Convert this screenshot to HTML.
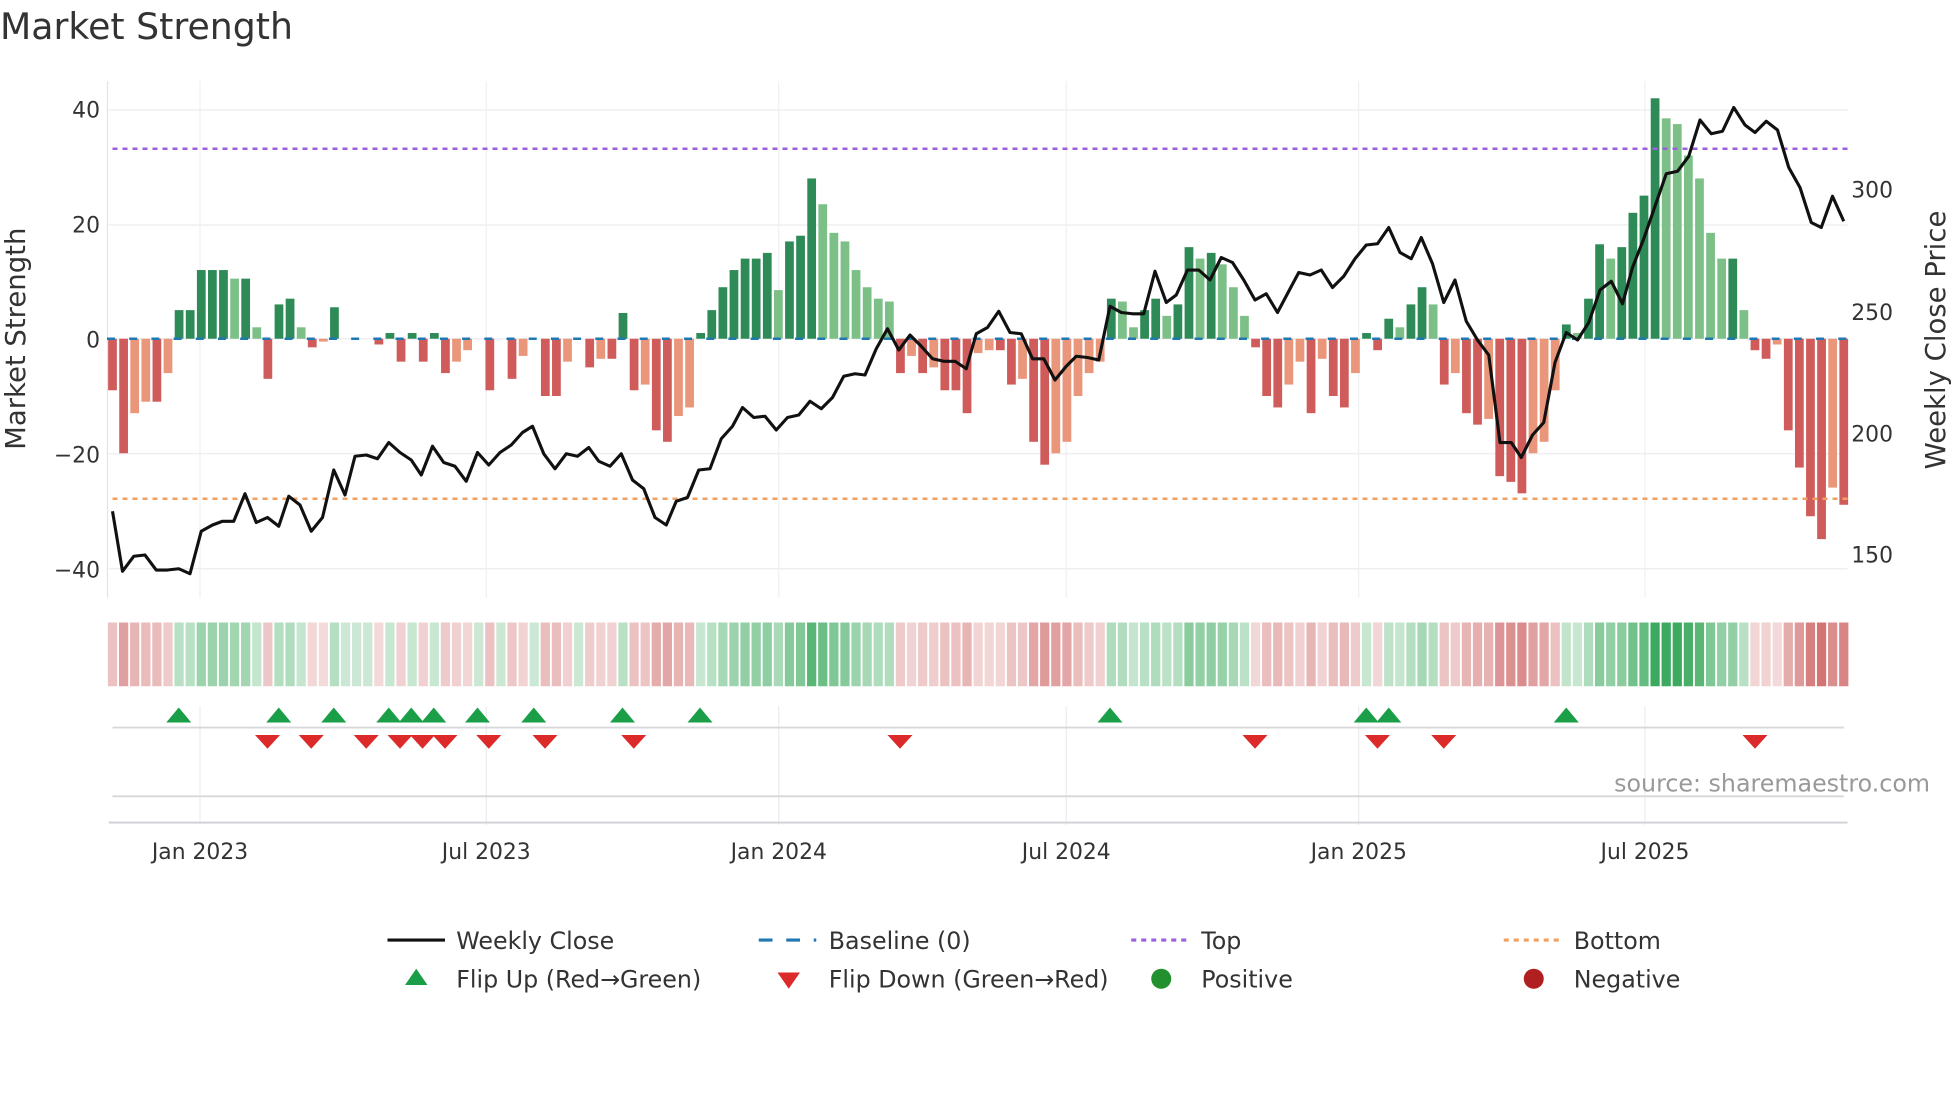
<!DOCTYPE html>
<html><head><meta charset="utf-8"><style>
html,body{margin:0;padding:0;background:#fff;width:1960px;height:1102px;overflow:hidden}
svg{display:block}
text{font-family:"DejaVu Sans","Liberation Sans",sans-serif;fill:#333}
</style></head><body>
<svg id="s" width="1960" height="1102" viewBox="0 0 1568 881.6" xmlns="http://www.w3.org/2000/svg">
<g id="grid"></g>
<g id="heat"></g>
<g id="bars"></g>
<line x1="90" y1="119" x2="1478" y2="119" stroke="#9b5fe0" stroke-width="2" stroke-dasharray="4,4"/>
<line x1="90" y1="399" x2="1478" y2="399" stroke="#f0a060" stroke-width="2" stroke-dasharray="4,4"/>
<g id="base"></g>
<polyline id="price" fill="none" stroke="#111" stroke-width="2.5" stroke-linejoin="round"/>
<g id="marks"></g>
<text x="0" y="31" font-size="29">Market Strength</text>
<g font-size="17.5" text-anchor="end">
<text x="80" y="94">40</text><text x="80" y="278">0</text><text x="80" y="186">20</text>
<text x="80" y="370">−20</text><text x="80" y="462">−40</text></g>
<g font-size="17.5">
<text x="1481" y="158">300</text><text x="1481" y="256">250</text><text x="1481" y="353">200</text><text x="1481" y="450">150</text></g>
<text transform="translate(20,271) rotate(-90)" font-size="22" text-anchor="middle">Market Strength</text>
<text transform="translate(1556,272) rotate(-90)" font-size="22" text-anchor="middle">Weekly Close Price</text>
<g font-size="17.5" text-anchor="middle">
<text x="160" y="687">Jan 2023</text><text x="389" y="687">Jul 2023</text><text x="623" y="687">Jan 2024</text>
<text x="853" y="687">Jul 2024</text><text x="1087" y="687">Jan 2025</text><text x="1316" y="687">Jul 2025</text></g>
<text x="1544" y="633" font-size="19" text-anchor="end" style="fill:#999">source: sharemaestro.com</text>
<g font-size="19">
<line x1="310" y1="752" x2="356" y2="752" stroke="#111" stroke-width="2.5"/><text x="365" y="759">Weekly Close</text>
<line x1="607" y1="752" x2="653" y2="752" stroke="#1f77b4" stroke-width="2.5" stroke-dasharray="11,11"/><text x="663" y="759">Baseline (0)</text>
<line x1="905" y1="752" x2="951" y2="752" stroke="#9b5fe0" stroke-width="2.5" stroke-dasharray="4,4"/><text x="961" y="759">Top</text>
<line x1="1203" y1="752" x2="1249" y2="752" stroke="#f0a060" stroke-width="2.5" stroke-dasharray="4,4"/><text x="1259" y="759">Bottom</text>
<polygon points="324,788 342,788 333,775" fill="#1a9e47"/><text x="365" y="790">Flip Up (Red→Green)</text>
<polygon points="622,778 640,778 631,791" fill="#dc2a2a"/><text x="663" y="790">Flip Down (Green→Red)</text>
<circle cx="929" cy="783" r="8" fill="#22902e"/><text x="961" y="790">Positive</text>
<circle cx="1227" cy="783" r="8" fill="#b02020"/><text x="1259" y="790">Negative</text>
</g>
</svg>
<script>
var NS="http://www.w3.org/2000/svg";
function el(p,t,a){var e=document.createElementNS(NS,t);for(var k in a)e.setAttribute(k,a[k]);document.getElementById(p).appendChild(e);return e;}
var v=[-9,-20,-13,-11,-11,-6,5,5,12,12,12,10.5,10.5,2,-7,6,7,2,-1.5,-0.5,5.5,0,0,0,-1,1,-4,1,-4,1,-6,-4,-2,0,-9,0,-7,-3,0,-10,-10,-4,0,-5,-3.5,-3.5,4.5,-9,-8,-16,-18,-13.5,-12,1,5,9,12,14,14,15,8.5,17,18,28,23.5,18.5,17,12,9,7,6.5,-6,-3,-6,-5,-9,-9,-13,-2.5,-2,-2,-8,-7,-18,-22,-20,-18,-10,-6,-4,7,6.5,2,5,7,4,6,16,14,15,13,9,4,-1.5,-10,-12,-8,-4,-13,-3.5,-10,-12,-6,1,-2,3.5,2,6,9,6,-8,-6,-13,-15,-14,-24,-25,-27,-20,-18,-9,2.5,1,7,16.5,14,16,22,25,42,38.5,37.5,32,28,18.5,14,14,5,-2,-3.5,-1,-16,-22.5,-31,-35,-26,-29];
var n=v.length,x0=90,dx=(1475-90)/(n-1),z=271,k=4.58;
[88,180,271,363,455].forEach(function(y){el("grid","line",{x1:87,x2:1478,y1:y,y2:y,stroke:"#ececf0","stroke-width":1});});
[160,389,623,853,1087,1316].forEach(function(x){el("grid","line",{x1:x,x2:x,y1:65,y2:478,stroke:"#f0f0f3"});el("grid","line",{x1:x,x2:x,y1:565,y2:660,stroke:"#ececef"});});
el("grid","line",{x1:86,x2:86,y1:65,y2:478,stroke:"#e4e4e8"});
el("grid","line",{x1:90,x2:1475,y1:582,y2:582,stroke:"#d8d8dc","stroke-width":1.5});
el("grid","line",{x1:90,x2:1475,y1:637,y2:637,stroke:"#d8d8dc","stroke-width":1.5});
el("grid","line",{x1:87,x2:1478,y1:658,y2:658,stroke:"#cfcfd4","stroke-width":1.5});
for(var i=0;i<n;i++){
 var x=x0+i*dx,val=v[i],pr=i?v[i-1]:val,c;
 if(val>=0)c=(val>=pr)?"#2e8b57":"#7cc088";else c=(val<=pr)?"#cf5c5a":"#e9967a";
 var h=Math.abs(val)*k,y=val>=0?z-h:z;
 if(h>0.3)el("bars","rect",{x:x-3.5,y:y,width:7,height:h,fill:c});
 var a=Math.min(Math.abs(val)/35,1),col;
 if(val>=0)col="rgba(50,165,85,"+(0.25+0.7*a)+")";else col="rgba(200,80,80,"+(0.2+0.6*a)+")";
 el("heat","rect",{x:x-3.7,y:498,width:7.4,height:51,fill:col});
 if(i%2==0)el("base","line",{x1:x-4.4,x2:x+2,y1:z,y2:z,stroke:"#1f77b4","stroke-width":2});
}
var p=[[90,409],[98,457],[107,445],[116,444],[125,456],[134,456],[143,455],[152,459],[161,425],[170,420],[178,417],[187,417],[196,395],[205,418],[214,414],[223,421],[231,397],[240,404],[249,425],[258,414],[267,376],[276,396],[284,365],[293,364],[302,367],[311,354],[320,362],[329,368],[337,380],[346,357],[355,370],[364,373],[373,385],[382,362],[391,372],[400,362],[409,356],[418,346],[426,341],[435,363],[444,375],[453,363],[462,365],[471,358],[479,369],[488,373],[497,363],[506,384],[515,391],[524,414],[533,420],[541,401],[550,398],[559,376],[568,375],[577,351],[586,341],[594,326],[603,334],[612,333],[621,344],[630,334],[639,332],[648,321],[657,327],[666,318],[675,301],[684,299],[692,300],[701,279],[710,263],[719,280],[728,268],[737,277],[746,287],[755,289],[764,289],[773,295],[781,267],[790,262],[799,249],[808,266],[817,267],[826,287],[835,287],[844,304],[853,293],[861,285],[870,286],[879,288],[888,245],[897,250],[906,251],[915,251],[924,217],[933,242],[941,236],[950,216],[959,216],[968,224],[977,206],[986,210],[995,224],[1004,240],[1013,235],[1022,250],[1031,233],[1039,218],[1048,220],[1057,216],[1066,230],[1075,221],[1084,207],[1093,196],[1102,195],[1111,182],[1120,202],[1129,207],[1137,190],[1146,211],[1155,242],[1164,224],[1173,257],[1182,272],[1191,284],[1200,354],[1209,354],[1217,366],[1226,348],[1235,338],[1244,290],[1253,266],[1262,272],[1271,258],[1280,232],[1289,225],[1298,243],[1306,214],[1315,191],[1324,165],[1333,139],[1342,137],[1351,125],[1360,96],[1369,107],[1378,105],[1387,86],[1396,100],[1404,106],[1413,97],[1422,104],[1431,134],[1440,150],[1449,178],[1457,182],[1466,157],[1475,177]];
document.getElementById("price").setAttribute("points",p.map(function(q){return q.join(",")}).join(" "));
[143,223,267,311,329,347,382,427,498,560,888,1093,1111,1253].forEach(function(x){el("marks","polygon",{points:(x-10)+",578 "+(x+10)+",578 "+x+",566",fill:"#1a9e47"});});
[214,249,293,320,338,356,391,436,507,720,1004,1102,1155,1404].forEach(function(x){el("marks","polygon",{points:(x-10)+",588 "+(x+10)+",588 "+x+",599",fill:"#dc2a2a"});});
</script>
</body></html>
